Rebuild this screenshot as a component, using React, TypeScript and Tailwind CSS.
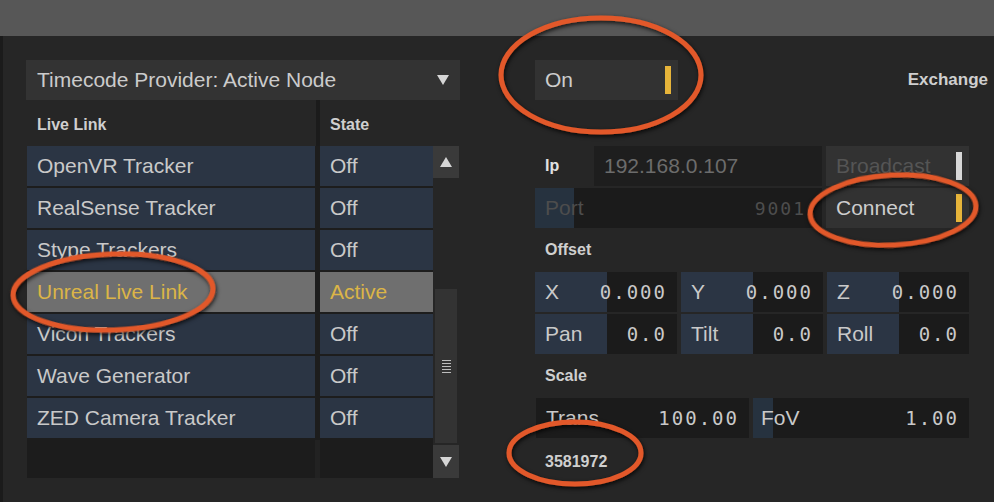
import React from "react";

const trackers = [
  { name: "OpenVR Tracker", state: "Off" },
  { name: "RealSense Tracker", state: "Off" },
  { name: "Stype Trackers", state: "Off" },
  { name: "Unreal Live Link", state: "Active", active: true },
  { name: "Vicon Trackers", state: "Off" },
  { name: "Wave Generator", state: "Off" },
  { name: "ZED Camera Tracker", state: "Off" },
];

const offsets = [
  [
    { label: "X", value: "0.000" },
    { label: "Y", value: "0.000" },
    { label: "Z", value: "0.000" },
  ],
  [
    { label: "Pan", value: "0.0" },
    { label: "Tilt", value: "0.0" },
    { label: "Roll", value: "0.0" },
  ],
];

function Triangle({ up = false }: { up?: boolean }) {
  return (
    <svg width="14" height="12" viewBox="0 0 14 12">
      <path d={up ? "M7 1 L13 11 L1 11 Z" : "M1 1 L13 1 L7 11 Z"} fill="#d6d6d6" />
    </svg>
  );
}

function Toggle({ label, bar, dim = false }: { label: string; bar: string; dim?: boolean }) {
  return (
    <div className="flex h-10 w-[143px] items-center justify-between bg-[#323232] pl-[10px] pr-[7px]">
      <span className={`text-[21px] ${dim ? "text-[#555]" : "text-[#cdcdcd]"}`}>{label}</span>
      <span className={`h-[28px] w-[6px] ${bar}`} />
    </div>
  );
}

function SectionLabel({ children, h }: { children: React.ReactNode; h: string }) {
  return (
    <div className={`flex items-center pl-[10px] text-[16px] font-bold text-[#cfcfcf] ${h}`}>{children}</div>
  );
}

export default function App() {
  return (
    <div className="relative h-[502px] w-[994px] overflow-hidden bg-[#262626] font-['Liberation_Sans',Arial,sans-serif]">
      <div className="h-9 bg-[#575757]" />

      <div className="flex h-[466px] border-l-[3px] border-[#1b1b1b]">
        {/* Left: live link list */}
        <div className="ml-[23px] mt-6 w-[434px]">
          <div className="flex h-10 items-center justify-between bg-[#333333] pl-[11px] pr-[10px]">
            <span className="text-[21px] text-[#cbcbcb]">Timecode Provider: Active Node</span>
            <Triangle />
          </div>

          <div className="flex h-[46px]">
            <div className="flex w-[290px] items-center pl-[11px] pt-[4px] text-[16px] font-bold text-[#cfcfcf]">Live Link</div>
            <div className="w-[4px] bg-[#1b1b1b]" />
            <div className="flex items-center pl-[10px] pt-[4px] text-[16px] font-bold text-[#cfcfcf]">State</div>
          </div>

          <div className="flex">
            <div className="ml-[1px] flex w-[406px] flex-col gap-[2px] bg-[#1d1d1d]">
              {trackers.map((t) => (
                <div key={t.name} className="flex h-10">
                  <div
                    className={`flex w-[288px] items-center pl-[10px] text-[21px] ${
                      t.active ? "bg-[#6f6f6f] text-[#dbb547]" : "bg-[#2b3544] text-[#c9c9c9]"
                    }`}
                  >
                    {t.name}
                  </div>
                  <div className="w-[5px]" />
                  <div
                    className={`flex w-[113px] items-center pl-[10px] text-[21px] ${
                      t.active ? "bg-[#6f6f6f] text-[#dbb547]" : "bg-[#2b3544] text-[#c9c9c9]"
                    }`}
                  >
                    {t.state}
                  </div>
                </div>
              ))}
              <div className="flex h-[38px]">
                <div className="w-[288px] bg-[#1c1c1c]" />
                <div className="w-[5px] bg-[#222]" />
                <div className="w-[113px] bg-[#1c1c1c]" />
              </div>
            </div>

            <div className="flex w-[26px] flex-col">
              <div className="flex h-8 items-center justify-center bg-[#3a3a3a]">
                <Triangle up />
              </div>
              <div className="flex flex-1 flex-col px-[2px] pb-[2px] pt-[111px]">
                <div className="flex flex-1 items-center justify-center bg-[#333333]">
                  <div className="flex flex-col gap-[2px]">
                    {[0, 1, 2, 3, 4].map((i) => (
                      <div key={i} className="h-[1px] w-[9px] bg-[#bdbdbd]" />
                    ))}
                  </div>
                </div>
              </div>
              <div className="flex h-[33px] items-center justify-center bg-[#3a3a3a]">
                <Triangle />
              </div>
            </div>
          </div>
        </div>

        {/* Right: exchange settings */}
        <div className="ml-[75px] mt-6 flex-1">
          <div className="flex h-10 items-center justify-between pr-[6px]">
            <Toggle label="On" bar="bg-[#e6b43a]" />
            <span className="text-[17px] font-bold text-[#cfcfcf]">Exchange</span>
          </div>

          <div className="mt-[46px] flex h-10 w-[434px] gap-[4px]">
            <div className="flex w-[55px] items-center pl-[10px] text-[16px] font-bold text-[#e0e0e0]">Ip</div>
            <div className="flex w-[228px] items-center bg-[#1e1e1e] pl-[10px] text-[21px] text-[#6c6c6c]">
              192.168.0.107
            </div>
            <Toggle label="Broadcast" bar="bg-[#d8d8d8]" dim />
          </div>

          <div className="mt-[2px] flex h-10 w-[434px] justify-between">
            <div className="flex w-[287px] items-center justify-between bg-[linear-gradient(to_right,#26323f_39px,#1b1b1b_39px)] pl-[10px] pr-[16px] text-[21px] text-[#4d4d4d]">
              <span>Port</span>
              <span className="font-['DejaVu_Sans_Mono',monospace] text-[18px] tracking-[2px]">9001</span>
            </div>
            <Toggle label="Connect" bar="bg-[#e6b43a]" />
          </div>

          <SectionLabel h="h-11">Offset</SectionLabel>

          <div className="flex w-[434px] flex-col gap-[2px]">
            {offsets.map((row, i) => (
              <div key={i} className="flex h-10 gap-[4px]">
                {row.map((c) => (
                  <div
                    key={c.label}
                    className="flex w-[142px] items-center justify-between bg-[linear-gradient(to_right,#2b3544_72px,#1b1b1b_72px)] pl-[10px] pr-[10px] text-[21px] text-[#c9c9c9]"
                  >
                    <span>{c.label}</span>
                    <span className="font-['DejaVu_Sans_Mono',monospace] text-[19px] tracking-[2px]">{c.value}</span>
                  </div>
                ))}
              </div>
            ))}
          </div>

          <SectionLabel h="h-11">Scale</SectionLabel>

          <div className="flex h-10 w-[434px] gap-[4px] pl-[1px]">
            <div className="flex w-[213px] items-center justify-between bg-[#1b1b1b] px-[10px] text-[21px] text-[#c9c9c9]">
              <span>Trans</span>
              <span className="font-['DejaVu_Sans_Mono',monospace] text-[19px] tracking-[2px]">100.00</span>
            </div>
            <div className="flex flex-1 items-center justify-between bg-[linear-gradient(to_right,#26323f_20px,#1b1b1b_20px)] pl-[8px] pr-[10px] text-[21px] text-[#c9c9c9]">
              <span>FoV</span>
              <span className="font-['DejaVu_Sans_Mono',monospace] text-[19px] tracking-[2px]">1.00</span>
            </div>
          </div>

          <SectionLabel h="h-12">3581972</SectionLabel>
        </div>
      </div>

      {/* annotation marks */}
      <svg className="pointer-events-none absolute inset-0" width="994" height="502" viewBox="0 0 994 502">
        <defs>
          <filter id="sh" x="-20%" y="-20%" width="140%" height="140%">
            <feDropShadow dx="1" dy="2" stdDeviation="2" floodColor="#000" floodOpacity="0.8" />
          </filter>
        </defs>
        <g fill="none" stroke="#e2592a" strokeWidth="5" filter="url(#sh)">
          <ellipse cx="601" cy="75" rx="100" ry="57" />
          <ellipse cx="893" cy="210" rx="83" ry="35" transform="rotate(-3 893 210)" />
          <ellipse cx="113" cy="292" rx="100" ry="38" transform="rotate(-2 113 292)" />
          <ellipse cx="575" cy="453" rx="66" ry="31" />
        </g>
      </svg>
    </div>
  );
}
